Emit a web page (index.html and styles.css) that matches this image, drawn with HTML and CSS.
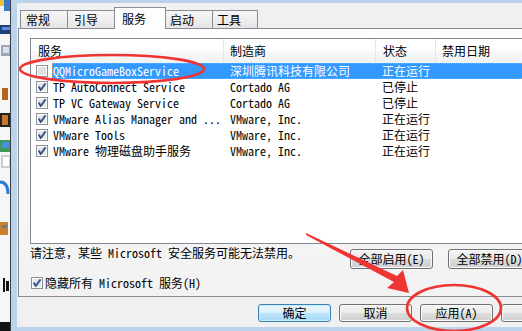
FILE: index.html
```html
<!DOCTYPE html>
<html lang="zh-CN">
<head>
<meta charset="utf-8">
<title>系统配置</title>
<link rel="stylesheet" href="styles.css">
</head>
<body>
<div class="screen">
  <svg class="desk" width="10" height="331" viewBox="0 0 10 331">
    <rect x="0" y="0" width="10" height="331" fill="#f4f6f8"/>
    <rect x="0" y="0" width="4" height="6" fill="#e9c23b"/>
    <rect x="4" y="0" width="6" height="11" fill="#3d78c9"/>
    <rect x="0" y="25" width="10" height="9" fill="#1d3f7a"/>
    <rect x="2" y="27" width="8" height="3" fill="#5d8fd6"/>
    <rect x="1" y="45" width="9" height="11" fill="#9aa6b4"/>
    <rect x="3" y="47" width="6" height="6" fill="#d8e2ee"/>
    <rect x="2" y="88" width="6" height="12" fill="#b5651d"/>
    <rect x="0" y="113" width="10" height="14" fill="#222"/>
    <rect x="2" y="115" width="6" height="10" fill="#c7772c"/>
    <rect x="0" y="140" width="10" height="12" fill="#3b9a5a"/>
    <rect x="2" y="142" width="7" height="6" fill="#4b8fd8"/>
    <rect x="1" y="155" width="9" height="13" fill="#c9ced4"/>
    <rect x="3" y="157" width="6" height="9" fill="#fff"/>
    <path d="M0 182 Q8 182 8 194" stroke="#2f7bd2" stroke-width="3" fill="none"/>
    <rect x="0" y="222" width="8" height="13" fill="#c8802e"/>
    <rect x="2" y="225" width="5" height="3" fill="#777"/>
    <rect x="3" y="278" width="2" height="14" fill="#111"/>
    <rect x="6" y="281" width="3" height="10" fill="#111"/>
    <rect x="0" y="322" width="10" height="9" fill="#111"/>
  </svg>
  <div class="edge"></div>
  <div class="win">
    <div class="client">
      <div class="tabs">
        <div class="tab t1">常规</div>
        <div class="tab t2">引导</div>
        <div class="tab t3 active">服务</div>
        <div class="tab t4">启动</div>
        <div class="tab t5">工具</div>
      </div>
      <div class="panel">
        <div class="lv">
          <div class="lv-head">
            <div class="hc c1">服务</div>
            <div class="hc c2">制造商</div>
            <div class="hc c3">状态</div>
            <div class="hc c4">禁用日期</div>
          </div>
          <div class="lv-row">
            <div class="cbcell">
              <svg class="cb" viewBox="0 0 12 12"><rect x=".5" y=".5" width="11" height="11" fill="#fff" stroke="#8e8f8f"/><rect x="2" y="2" width="8" height="8" fill="#dfe1e3"/></svg>
            </div>
            <div class="cells sel">
              <div class="rc n">QQMicroGameBoxService</div>
              <div class="rc m">深圳腾讯科技有限公司</div>
              <div class="rc s">正在运行</div>
              <div class="rc d"></div>
            </div>
          </div>
          <div class="lv-row">
            <div class="cbcell">
              <svg class="cb" viewBox="0 0 12 12"><rect x=".5" y=".5" width="11" height="11" fill="#fff" stroke="#8e8f8f"/><rect x="2" y="2" width="8" height="8" fill="#e4e6e9"/><path d="M2.6 5.6 L4.8 8.8 L9.6 2.4" fill="none" stroke="#38548f" stroke-width="1.9"/></svg>
            </div>
            <div class="cells">
              <div class="rc n">TP AutoConnect Service</div>
              <div class="rc m">Cortado AG</div>
              <div class="rc s">已停止</div>
              <div class="rc d"></div>
            </div>
          </div>
          <div class="lv-row">
            <div class="cbcell">
              <svg class="cb" viewBox="0 0 12 12"><rect x=".5" y=".5" width="11" height="11" fill="#fff" stroke="#8e8f8f"/><rect x="2" y="2" width="8" height="8" fill="#e4e6e9"/><path d="M2.6 5.6 L4.8 8.8 L9.6 2.4" fill="none" stroke="#38548f" stroke-width="1.9"/></svg>
            </div>
            <div class="cells">
              <div class="rc n">TP VC Gateway Service</div>
              <div class="rc m">Cortado AG</div>
              <div class="rc s">已停止</div>
              <div class="rc d"></div>
            </div>
          </div>
          <div class="lv-row">
            <div class="cbcell">
              <svg class="cb" viewBox="0 0 12 12"><rect x=".5" y=".5" width="11" height="11" fill="#fff" stroke="#8e8f8f"/><rect x="2" y="2" width="8" height="8" fill="#e4e6e9"/><path d="M2.6 5.6 L4.8 8.8 L9.6 2.4" fill="none" stroke="#38548f" stroke-width="1.9"/></svg>
            </div>
            <div class="cells">
              <div class="rc n">VMware Alias Manager and ...</div>
              <div class="rc m">VMware, Inc.</div>
              <div class="rc s">正在运行</div>
              <div class="rc d"></div>
            </div>
          </div>
          <div class="lv-row">
            <div class="cbcell">
              <svg class="cb" viewBox="0 0 12 12"><rect x=".5" y=".5" width="11" height="11" fill="#fff" stroke="#8e8f8f"/><rect x="2" y="2" width="8" height="8" fill="#e4e6e9"/><path d="M2.6 5.6 L4.8 8.8 L9.6 2.4" fill="none" stroke="#38548f" stroke-width="1.9"/></svg>
            </div>
            <div class="cells">
              <div class="rc n">VMware Tools</div>
              <div class="rc m">VMware, Inc.</div>
              <div class="rc s">正在运行</div>
              <div class="rc d"></div>
            </div>
          </div>
          <div class="lv-row">
            <div class="cbcell">
              <svg class="cb" viewBox="0 0 12 12"><rect x=".5" y=".5" width="11" height="11" fill="#fff" stroke="#8e8f8f"/><rect x="2" y="2" width="8" height="8" fill="#e4e6e9"/><path d="M2.6 5.6 L4.8 8.8 L9.6 2.4" fill="none" stroke="#38548f" stroke-width="1.9"/></svg>
            </div>
            <div class="cells">
              <div class="rc n">VMware 物理磁盘助手服务</div>
              <div class="rc m">VMware, Inc.</div>
              <div class="rc s">正在运行</div>
              <div class="rc d"></div>
            </div>
          </div>
        </div>
        <div class="note-row">
          <span class="note">请注意，某些 Microsoft 安全服务可能无法禁用。</span>
          <div class="note-btns">
            <button class="btn big">全部启用(E)</button>
            <button class="btn big">全部禁用(D)</button>
          </div>
        </div>
        <label class="hide-ms">
          <svg class="cb" viewBox="0 0 12 12"><rect x=".5" y=".5" width="11" height="11" fill="#fff" stroke="#8e8f8f"/><rect x="2" y="2" width="8" height="8" fill="#e4e6e9"/><path d="M2.6 5.6 L4.8 8.8 L9.6 2.4" fill="none" stroke="#38548f" stroke-width="1.9"/></svg>
          <span>隐藏所有 Microsoft 服务(H)</span>
        </label>
      </div>
      <div class="actions">
        <button class="btn default">确定</button>
        <button class="btn">取消</button>
        <button class="btn">应用(A)</button>
        <button class="btn" aria-label="帮助"></button>
      </div>
    </div>
  </div>
  <svg class="marks" width="522" height="331" viewBox="0 0 522 331">
    <ellipse cx="112" cy="69" rx="92" ry="14" fill="none" stroke="#ef3434" stroke-width="2.6"/>
    <ellipse cx="454" cy="308" rx="47" ry="23" fill="none" stroke="#ef3434" stroke-width="2.6"/>
    <polygon points="306,233 397,276 403,270 409,293 387,288 394,282 306,235" fill="#ef3434"/>
  </svg>
</div>
</body>
</html>
```

FILE: styles.css
```css
* { box-sizing: border-box; }
html, body { margin: 0; padding: 0; }
body {
  width: 522px;
  height: 331px;
  overflow: hidden;
  background: #f0f0f0;
  font-family: "Noto Sans Mono CJK SC", "Noto Sans CJK SC", "Liberation Mono", monospace;
  font-size: 12px;
  color: #000;
}
.screen {
  position: relative;
  display: flex;
  width: 522px;
  height: 331px;
  overflow: hidden;
}
.desk { flex: 0 0 10px; display: block; }
.edge { flex: 0 0 1px; background: #3a3f47; }
.win {
  flex: 0 0 600px;
  height: 331px;
  border-left: 6px solid #bcd3ec;
  border-top: 3px solid #bcd3ec;
  border-bottom: 4px solid #bcd3ec;
  background: #f0f0f0;
}
.client {
  height: 324px;
  display: flex;
  flex-direction: column;
}
.tabs {
  display: flex;
  align-items: flex-end;
  height: 22px;
  margin: 4px 0 0 3px;
}
.tab {
  height: 19px;
  border: 1px solid #898c95;
  border-bottom: none;
  background: linear-gradient(#f6f6f6, #e4e4e4);
  padding-left: 5px;
  line-height: 17px;
  margin-left: -1px;
  white-space: nowrap;
}
.t1 { width: 48px; margin-left: 0; }
.t2 { width: 48px; padding-left: 6px; }
.t3 { width: 52px; }
.t4 { width: 48px; padding-left: 4px; }
.t5 { width: 46px; padding-left: 4px; }
.tab.active {
  position: relative;
  z-index: 2;
  height: 22px;
  background: #fdfdfd;
  padding-left: 7px;
  padding-top: 1px;
  line-height: 19px;
}
.panel {
  margin: -1px 0 0 1px;
  width: 560px;
  border: 1px solid #898c95;
  background: linear-gradient(#fdfdfd, #f2f2f2);
  padding: 9px 0 5px 11px;
}
.lv {
  width: 501px;
  height: 206px;
  border: 1px solid #828790;
  background: #fff;
}
.lv-head {
  display: flex;
  height: 24px;
  background: linear-gradient(#ffffff 0%, #ffffff 45%, #f6f7f9 55%, #f1f2f4 100%);
}
.hc {
  line-height: 24px;
  border-right: 1px solid #e3e5e8;
  white-space: nowrap;
}
.hc.c1 { width: 193px; padding-left: 7px; }
.hc.c2 { width: 152px; padding-left: 6px; }
.hc.c3 { width: 60px; padding-left: 7px; }
.hc.c4 { flex: 1; padding-left: 6px; border-right: none; }
.lv-row {
  display: flex;
  height: 16px;
}
.cbcell {
  flex: 0 0 21px;
  display: flex;
  align-items: center;
  padding-left: 5px;
}
.cb { width: 12px; height: 12px; display: block; flex: 0 0 12px; }
.cells { flex: 1; display: flex; }
.cells.sel {
  background: #3399ff;
  color: #fff;
  outline: 1px dotted #e19a4f;
  outline-offset: -1px;
}
.rc {
  line-height: 16px;
  white-space: nowrap;
  overflow: hidden;
}
.rc.n { width: 172px; padding-left: 1px; }
.rc.m { width: 152px; padding-left: 6px; }
.rc.s { width: 60px; padding-left: 6px; }
.rc.d { flex: 1; }
.note-row {
  display: flex;
  justify-content: space-between;
  width: 501px;
  height: 24px;
  margin-top: 1px;
}
.note { line-height: 16px; white-space: nowrap; }
.note-btns { display: flex; gap: 15px; padding-top: 4px; }
.btn {
  font: inherit;
  color: #000;
  width: 73px;
  height: 18px;
  padding: 0;
  line-height: 16px;
  border: 1px solid #707070;
  border-radius: 3px;
  background: linear-gradient(#f2f2f2 0%, #ebebeb 50%, #dddddd 50%, #cfcfcf 100%);
  box-shadow: inset 0 0 0 1px #fbfbfb;
  white-space: nowrap;
}
.btn.big { width: 83px; height: 20px; line-height: 18px; }
.btn.default {
  border-color: #3c7fb1;
  background: linear-gradient(#eaf6fd 0%, #d9f0fc 50%, #bee6fd 50%, #a7d9f5 100%);
  box-shadow: inset 0 0 0 1px #c9ecfb;
}
.hide-ms {
  display: flex;
  align-items: center;
  gap: 2px;
  height: 16px;
  margin: 6px 0 0 1px;
  line-height: 16px;
  white-space: nowrap;
}
.actions {
  display: flex;
  gap: 8px;
  margin-top: 7px;
  padding-left: 241px;
}
.marks {
  position: absolute;
  left: 0;
  top: 0;
  pointer-events: none;
}
```
